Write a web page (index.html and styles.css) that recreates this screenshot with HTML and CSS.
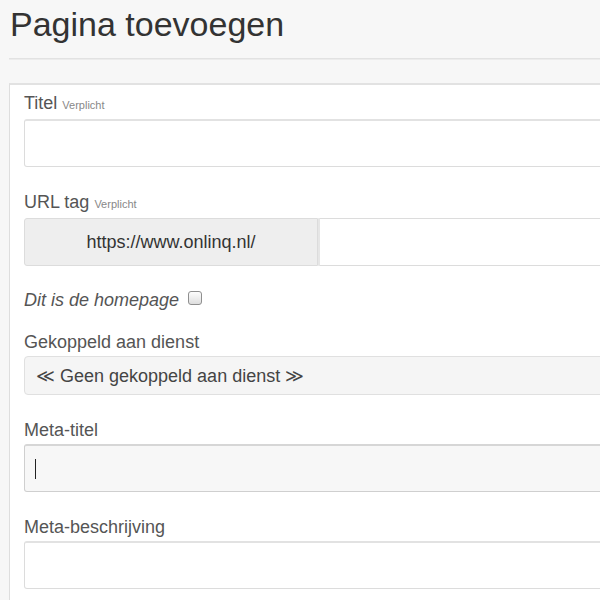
FILE: index.html
```html
<!DOCTYPE html>
<html lang="nl">
<head>
<meta charset="utf-8">
<title>Pagina toevoegen</title>
<link rel="stylesheet" href="styles.css">
</head>
<body>
<div class="page">
  <h1 class="page-title">Pagina toevoegen</h1>
  <hr class="divider">
  <div class="panel">
    <div class="form-group">
      <label class="label">Titel <small class="req">Verplicht</small></label>
      <div class="input"></div>
    </div>
    <div class="form-group">
      <label class="label">URL tag <small class="req">Verplicht</small></label>
      <div class="input-group">
        <span class="addon">https://www.onlinq.nl/</span>
        <div class="input input-joined"></div>
      </div>
    </div>
    <div class="check-row">
      <em class="check-label">Dit is de homepage</em>
      <span class="checkbox"></span>
    </div>
    <div class="form-group">
      <label class="label">Gekoppeld aan dienst</label>
      <div class="select">≪ Geen gekoppeld aan dienst ≫</div>
    </div>
    <div class="form-group">
      <label class="label">Meta-titel</label>
      <div class="input input-focus"><span class="caret"></span></div>
    </div>
    <div class="form-group">
      <label class="label">Meta-beschrijving</label>
      <div class="input"></div>
    </div>
  </div>
</div>
</body>
</html>
```
FILE: styles.css
```css
html, body {
  margin: 0;
  padding: 0;
  background: #f7f7f7;
  overflow: hidden;
}
body {
  font-family: "Liberation Sans", Arial, sans-serif;
  color: #333;
  width: 600px;
  height: 600px;
}
.page {
  padding: 4px 0 0 9px;
  width: 760px;
}
.page-title {
  margin: 0 0 0 1px;
  font-size: 34px;
  line-height: 40px;
  font-weight: normal;
  color: #333;
}
.divider {
  margin: 14px 0 0 0;
  border: 0;
  height: 1px;
  background: #e2e2e2;
  border-bottom: 1px solid #ececec;
}
.panel {
  margin-top: 23px;
  background: #fff;
  border: 1px solid #dedede;
  border-top: 2px solid #e2e2e2;
  padding: 3px 14px 0 14px;
  height: 600px;
}
.form-group {
  margin-bottom: 20px;
}
.label {
  display: block;
  font-size: 18px;
  line-height: 26px;
  padding-top: 2px;
  margin-bottom: 1px;
  color: #555;
}
.req {
  font-size: 11px;
  color: #888;
}
.input {
  box-sizing: border-box;
  height: 48px;
  background: #fff;
  border: 1px solid #dcdcdc;
  border-top: 2px solid #e2e2e2;
  border-radius: 3px;
  display: flex;
  align-items: center;
  padding-left: 10px;
}
.input-group {
  display: flex;
}
.addon {
  box-sizing: border-box;
  width: 294px;
  height: 48px;
  background: #eeeeee;
  border: 1px solid #dcdcdc;
  border-radius: 3px 0 0 3px;
  display: flex;
  align-items: center;
  justify-content: center;
  font-size: 18px;
  color: #333;
}
.input-joined {
  flex: 1;
  border-radius: 0 3px 3px 0;
  border-left: 2px solid #e6e6e6;
  border-top: 1px solid #dcdcdc;
}
.check-row {
  display: flex;
  align-items: center;
  height: 24px;
  padding-top: 2px;
  margin-bottom: 15px;
}
.check-label {
  font-size: 18px;
  color: #555;
}
.checkbox {
  box-sizing: border-box;
  width: 14px;
  height: 14px;
  margin-left: 9px;
  margin-top: -4px;
  border: 1px solid #8f8f8f;
  border-radius: 3px;
  background: linear-gradient(#fdfdfd, #dedede);
}
.select {
  box-sizing: border-box;
  height: 39px;
  background: #f5f5f5;
  border: 1px solid #e0e0e0;
  border-radius: 4px;
  display: flex;
  align-items: center;
  padding-left: 11px;
  font-size: 18px;
  color: #444;
}
.input-focus {
  background: #f7f7f7;
  border: 1px solid #cfcfcf;
  border-top: 2px solid #d6d6d6;
}
.caret {
  width: 1px;
  height: 20px;
  background: #222;
}
```
